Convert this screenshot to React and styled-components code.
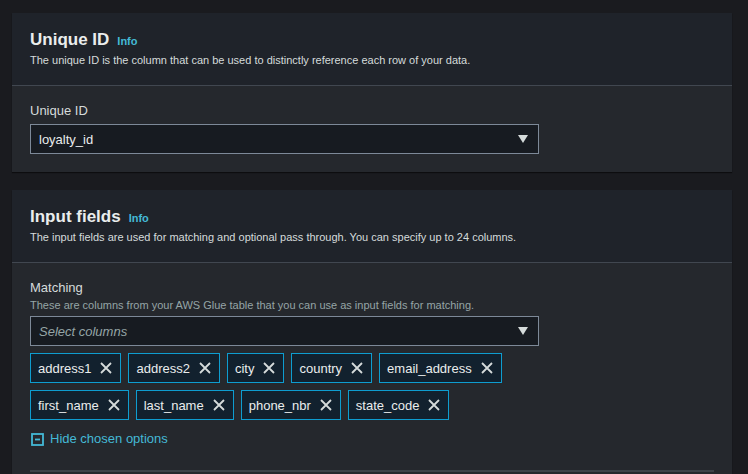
import React from "react";
import styled, { createGlobalStyle } from "styled-components";

const GlobalStyle = createGlobalStyle`
  html, body {
    margin: 0;
    padding: 0;
    background: #1a1b1f;
  }
  body {
    font-family: "Liberation Sans", Arial, sans-serif;
    color: #d5dbdb;
  }
`;

const tokens = [
  ["address1", "address2", "city", "country", "email_address"],
  ["first_name", "last_name", "phone_nbr", "state_code"],
];

const Page = styled.div`
  padding: 13px 16px 0 12px;
  height: 474px;
  box-sizing: border-box;
  overflow: hidden;
  display: flex;
  flex-direction: column;
  gap: 18px;
`;

const Panel = styled.section`
  background: #25282d;
  box-shadow: 0 1px 1px rgba(0, 0, 0, 0.5);
  flex-shrink: 0;
`;

const PanelHeader = styled.div`
  background: #1f232a;
  padding: 16px 18px 17px;
  border-bottom: 1px solid #414750;
`;

const Title = styled.h2`
  margin: 0;
  font-size: 17px;
  line-height: 22px;
  font-weight: 700;
  color: #eaeded;
  display: flex;
  align-items: baseline;
  gap: 8px;
`;

const Info = styled.a`
  font-size: 11px;
  font-weight: 700;
  color: #44b9d6;
  text-decoration: none;
`;

const Description = styled.p`
  margin: 0;
  font-size: 11px;
  line-height: 16px;
  color: #d5dbdb;
`;

const PanelBody = styled.div`
  padding: 16px 18px ${(p) => p.$bottom || 18}px;
`;

const Label = styled.div`
  font-size: 13px;
  line-height: 18px;
  color: #d5dbdb;
`;

const Hint = styled.div`
  font-size: 11px;
  line-height: 16px;
  color: #95a5a6;
  margin-bottom: 3px;
`;

const Select = styled.div`
  width: 509px;
  height: 30px;
  box-sizing: border-box;
  margin-top: ${(p) => p.$top || 0}px;
  background: #171b21;
  border: 1px solid #7d8998;
  display: flex;
  align-items: center;
  justify-content: space-between;
  padding: 0 10px 0 8px;
  font-size: 13px;
  color: ${(p) => (p.$placeholder ? "#95a5a6" : "#eaeded")};
  font-style: ${(p) => (p.$placeholder ? "italic" : "normal")};
`;

const TokenList = styled.div`
  margin-top: 7px;
  display: flex;
  flex-direction: column;
  gap: 7px;
`;

const TokenRow = styled.div`
  display: flex;
  gap: 7px;
`;

const Token = styled.div`
  height: 30px;
  box-sizing: border-box;
  display: flex;
  align-items: center;
  gap: 9px;
  padding: 0 8px 0 7px;
  background: #12212e;
  border: 1px solid #0e9dd0;
  font-size: 13px;
  color: #eaeded;
`;

const HideLink = styled.a`
  margin-top: 10px;
  display: flex;
  align-items: center;
  gap: 6px;
  font-size: 13px;
  line-height: 18px;
  color: #44b9d6;
  text-decoration: none;
  padding-left: 1px;
`;

const Divider = styled.div`
  margin-top: 22px;
  border-top: 2px solid #3d4248;
`;

const Caret = () => (
  <svg width="10" height="8" viewBox="0 0 10 8">
    <path d="M0 0 H10 L5 8 Z" fill="#d5dbdb" />
  </svg>
);

const Cross = () => (
  <svg width="12" height="12" viewBox="0 0 12 12">
    <path d="M1 1 L11 11 M11 1 L1 11" stroke="#d5dbdb" strokeWidth="1.8" fill="none" />
  </svg>
);

const MinusBox = () => (
  <svg width="13" height="13" viewBox="0 0 13 13">
    <rect x="1" y="1" width="11" height="11" fill="none" stroke="#44b9d6" strokeWidth="1.8" />
    <path d="M4 6.5 H9" stroke="#44b9d6" strokeWidth="1.8" />
  </svg>
);

const App = () => {
  return (
    <>
      <GlobalStyle />
      <Page>
        <Panel>
          <PanelHeader>
            <Title>
              Unique ID <Info href="#">Info</Info>
            </Title>
            <Description>
              The unique ID is the column that can be used to distinctly reference each row of your data.
            </Description>
          </PanelHeader>
          <PanelBody>
            <Label>Unique ID</Label>
            <Select $top={4}>
              <span>loyalty_id</span>
              <Caret />
            </Select>
          </PanelBody>
        </Panel>

        <Panel>
          <PanelHeader>
            <Title>
              Input fields <Info href="#">Info</Info>
            </Title>
            <Description>
              The input fields are used for matching and optional pass through. You can specify up to 24 columns.
            </Description>
          </PanelHeader>
          <PanelBody $bottom={40}>
            <Label>Matching</Label>
            <Hint>These are columns from your AWS Glue table that you can use as input fields for matching.</Hint>
            <Select $placeholder>
              <span>Select columns</span>
              <Caret />
            </Select>
            <TokenList>
              {tokens.map((row, i) => (
                <TokenRow key={i}>
                  {row.map((t) => (
                    <Token key={t}>
                      {t}
                      <Cross />
                    </Token>
                  ))}
                </TokenRow>
              ))}
            </TokenList>
            <HideLink href="#">
              <MinusBox />
              Hide chosen options
            </HideLink>
            <Divider />
          </PanelBody>
        </Panel>
      </Page>
    </>
  );
};

export default App;
